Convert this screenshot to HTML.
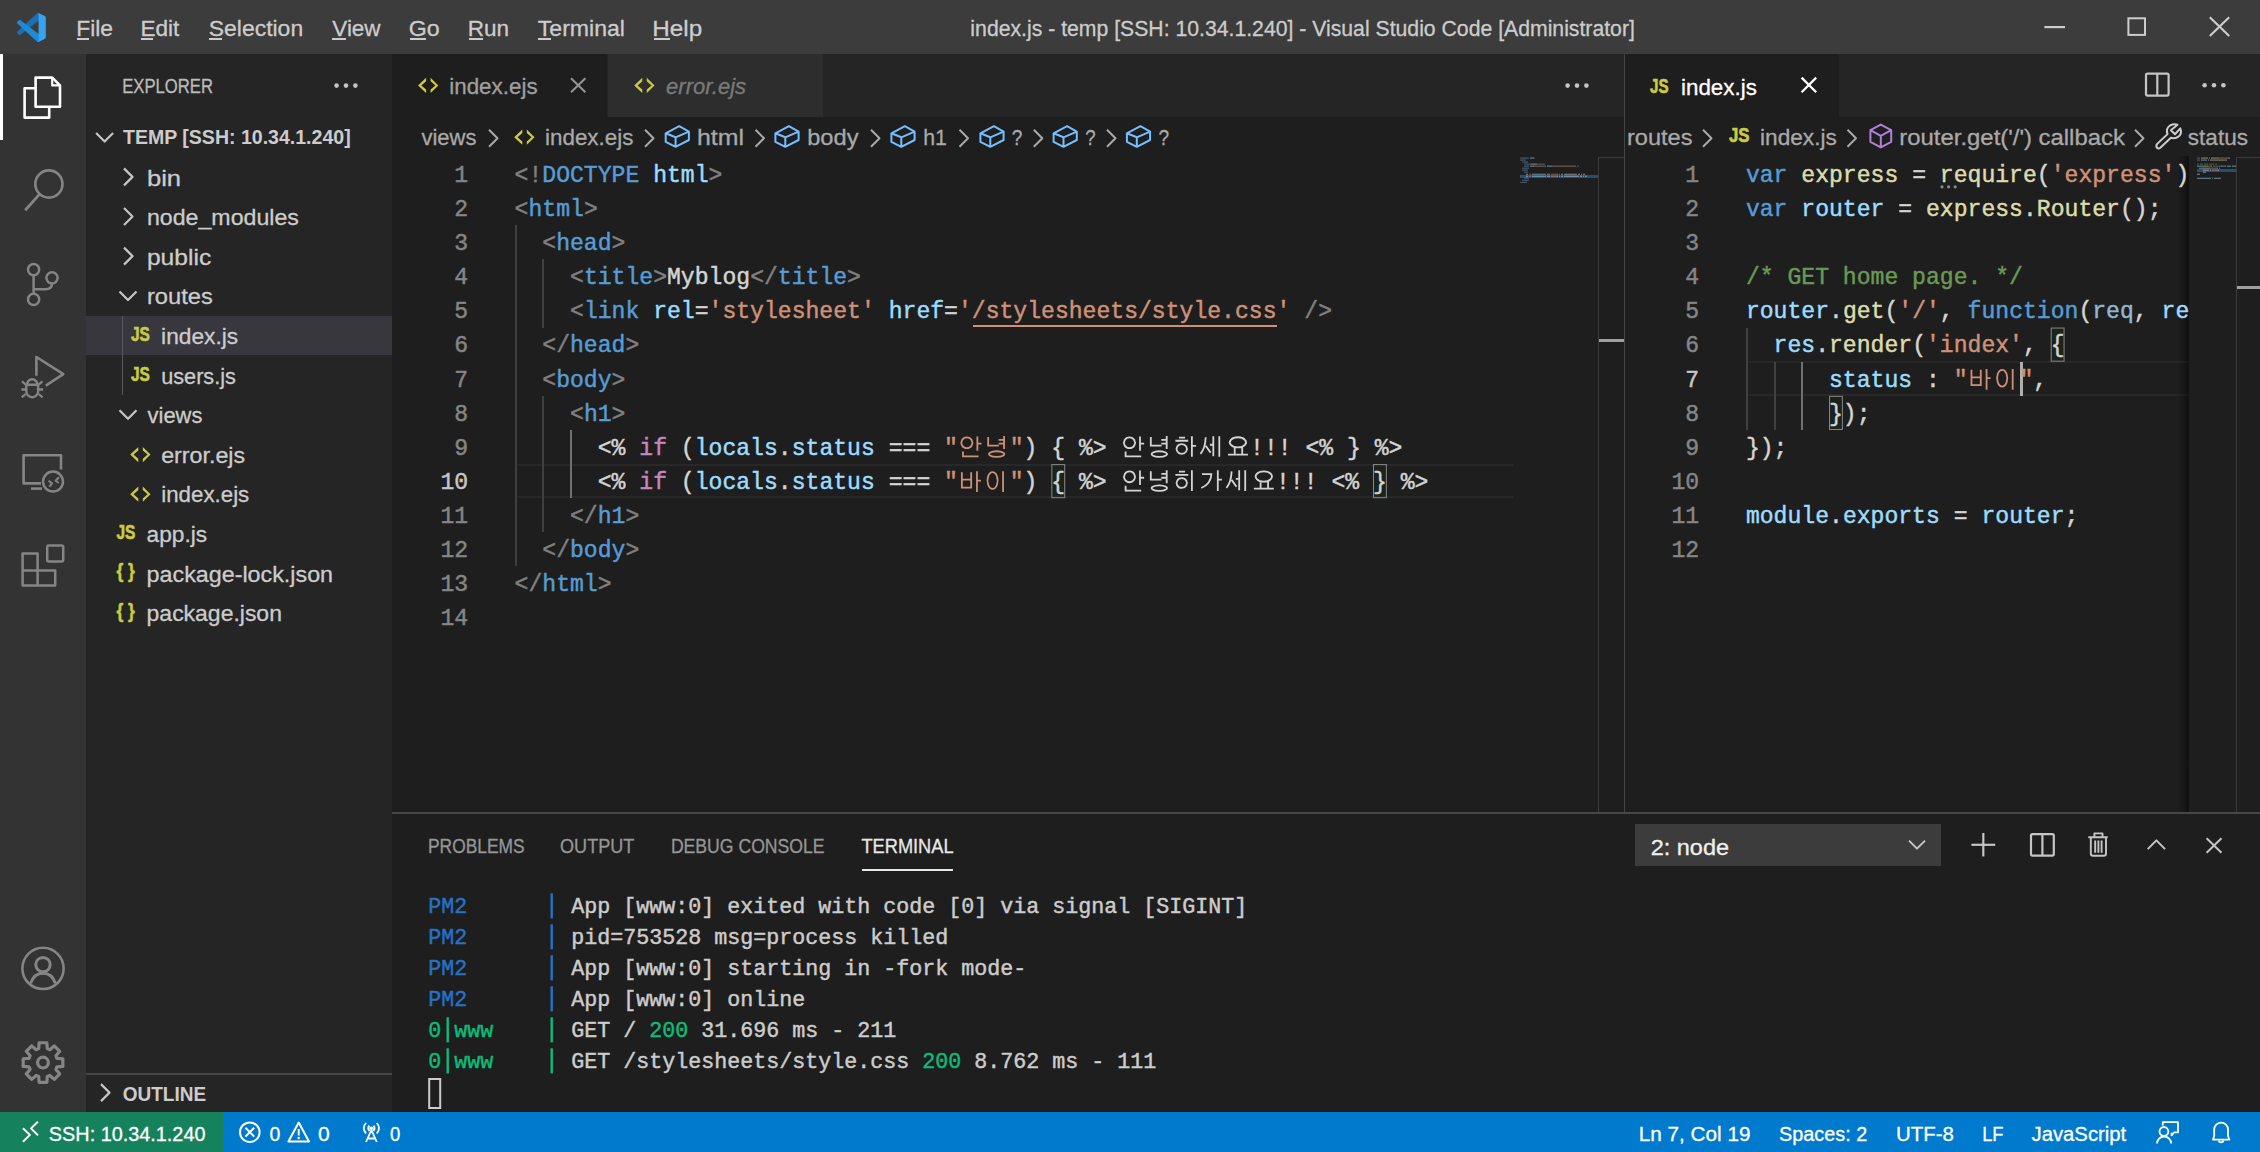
<!DOCTYPE html><html><head><meta charset="utf-8"><title>index.js - temp [SSH: 10.34.1.240] - Visual Studio Code</title><style>
html,body{margin:0;padding:0;width:2260px;height:1152px;overflow:hidden;background:#1e1e1e;}
#root{position:relative;width:2260px;height:1152px;overflow:hidden;font-family:"Liberation Sans",sans-serif;}
#root>div{position:absolute;}
svg.ov{position:absolute;left:0;top:0;}
text{white-space:pre;}
</style></head><body><div id="root">
<div style="left:0.00px;top:0.00px;width:2260.00px;height:54.00px;background:#3c3c3c;"></div>
<div style="left:0.00px;top:54.00px;width:86.00px;height:1058.00px;background:#333333;"></div>
<div style="left:86.00px;top:54.00px;width:306.00px;height:1058.00px;background:#252526;"></div>
<div style="left:392.00px;top:54.00px;width:1868.00px;height:1058.00px;background:#1e1e1e;"></div>
<div style="left:392.00px;top:54.00px;width:1232.00px;height:63.00px;background:#252526;"></div>
<div style="left:392.00px;top:54.00px;width:215.00px;height:63.00px;background:#1e1e1e;"></div>
<div style="left:608.00px;top:54.00px;width:215.00px;height:63.00px;background:#2d2d2d;"></div>
<div style="left:1625.00px;top:54.00px;width:635.00px;height:63.00px;background:#252526;"></div>
<div style="left:1625.00px;top:54.00px;width:214.00px;height:63.00px;background:#1e1e1e;"></div>
<div style="left:1624.00px;top:54.00px;width:1.00px;height:759.00px;background:#444444;"></div>
<div style="left:0.00px;top:1112.00px;width:2260.00px;height:40.00px;background:#007acc;"></div>
<div style="left:0.00px;top:1112.00px;width:223.00px;height:40.00px;background:#16825d;"></div>
<div style="left:0.00px;top:54.00px;width:3.00px;height:86.00px;background:#ffffff;"></div>
<div style="left:77.00px;top:38.40px;width:12.00px;height:1.80px;background:#cccccc;"></div>
<div style="left:141.00px;top:38.40px;width:12.00px;height:1.80px;background:#cccccc;"></div>
<div style="left:209.00px;top:38.40px;width:13.00px;height:1.80px;background:#cccccc;"></div>
<div style="left:332.00px;top:38.40px;width:14.00px;height:1.80px;background:#cccccc;"></div>
<div style="left:410.00px;top:38.40px;width:16.00px;height:1.80px;background:#cccccc;"></div>
<div style="left:469.00px;top:38.40px;width:14.00px;height:1.80px;background:#cccccc;"></div>
<div style="left:538.00px;top:38.40px;width:13.00px;height:1.80px;background:#cccccc;"></div>
<div style="left:654.00px;top:38.40px;width:16.00px;height:1.80px;background:#cccccc;"></div>
<div style="left:86.00px;top:315.50px;width:306.00px;height:39.60px;background:#37373d;"></div>
<div style="left:121.60px;top:315.50px;width:1.20px;height:79.20px;background:#585858;"></div>
<div style="left:86.00px;top:1073.00px;width:306.00px;height:2.00px;background:#464646;"></div>
<div style="left:515.00px;top:463.57px;width:998.00px;height:2.30px;background:#282828;"></div>
<div style="left:515.00px;top:495.90px;width:998.00px;height:2.30px;background:#282828;"></div>
<div style="left:515.00px;top:225.16px;width:2.00px;height:341.30px;background:#404040;"></div>
<div style="left:542.00px;top:259.29px;width:2.00px;height:68.26px;background:#404040;"></div>
<div style="left:542.00px;top:395.81px;width:2.00px;height:136.52px;background:#404040;"></div>
<div style="left:570.00px;top:429.94px;width:2.00px;height:68.26px;background:#707070;"></div>
<div style="left:972.82px;top:325.02px;width:303.81px;height:2.00px;background:#ce9178;"></div>
<div style="left:1746.00px;top:361.18px;width:443.00px;height:2.30px;background:#282828;"></div>
<div style="left:1746.00px;top:393.51px;width:443.00px;height:2.30px;background:#282828;"></div>
<div style="left:1746.00px;top:327.55px;width:2.00px;height:102.39px;background:#404040;"></div>
<div style="left:1774.00px;top:361.68px;width:2.00px;height:68.26px;background:#404040;"></div>
<div style="left:1801.00px;top:361.68px;width:2.00px;height:68.26px;background:#707070;"></div>
<div style="left:2019.90px;top:361.98px;width:2.80px;height:34.33px;background:#aeafad;"></div>
<div style="left:2177px;top:156px;width:12px;height:657px;background:linear-gradient(to right, rgba(0,0,0,0), rgba(0,0,0,0.45));"></div>
<div style="left:1598.00px;top:156.50px;width:1.20px;height:656.50px;background:#3a3a3a;"></div>
<div style="left:1598.00px;top:156.50px;width:26.00px;height:1.20px;background:#3a3a3a;"></div>
<div style="left:1599.00px;top:339.00px;width:25.00px;height:3.00px;background:#a0a0a0;"></div>
<div style="left:2236.00px;top:156.50px;width:1.20px;height:656.50px;background:#3a3a3a;"></div>
<div style="left:2236.00px;top:156.50px;width:24.00px;height:1.20px;background:#3a3a3a;"></div>
<div style="left:2237.00px;top:285.50px;width:23.00px;height:3.00px;background:#a0a0a0;"></div>
<div style="left:1520.00px;top:175.27px;width:78.00px;height:2.43px;background:#264f78;"></div>
<div style="left:2197.00px;top:169.18px;width:39.00px;height:2.43px;background:#264f78;"></div>
<div style="left:392.00px;top:812.00px;width:1868.00px;height:2.00px;background:#474747;"></div>
<div style="left:861.50px;top:869.00px;width:91.50px;height:2.00px;background:#e7e7e7;"></div>
<div style="left:1634.80px;top:824.20px;width:305.80px;height:41.60px;background:#3c3c3c;"></div>
<svg class="ov" width="2260" height="1152" viewBox="0 0 2260 1152">
<g transform="translate(17,12.9) scale(0.288,0.291)"><path fill="#1b6fb3" d="M96.46 10.8L75.86.88C73.47-.27 70.62.21 68.75 2.08L1.3 63.58c-1.81 1.65-1.81 4.51 0 6.16l5.51 5.01c1.49 1.35 3.72 1.45 5.32.24L93.36 13.37C96.09 11.3 100 13.25 100 16.67v-.24c0-2.4-1.38-4.59-3.54-5.63z"/><path fill="#1d8ad9" d="M96.46 89.2L75.86 99.12c-2.39 1.15-5.24.67-7.11-1.2L1.3 36.42c-1.81-1.65-1.81-4.51 0-6.16l5.51-5.01c1.49-1.35 3.72-1.45 5.32-.24L93.36 86.63c2.73 2.07 6.64.12 6.64-3.3v.24c0 2.4-1.38 4.59-3.54 5.63z"/><path fill="#35a3ef" d="M75.86 99.13c-2.39 1.15-5.24.66-7.11-1.21 2.31 2.31 6.25.67 6.25-2.59V4.67c0-3.26-3.94-4.9-6.25-2.59 1.87-1.87 4.72-2.36 7.11-1.21l20.6 9.91A6.25 6.25 0 0 1 100 16.41v67.18a6.25 6.25 0 0 1-3.54 5.63z"/></g>
<text transform="translate(76.20,36.10) scale(1.0000,1)" font-size="22.80" fill="#cccccc" stroke="#cccccc" stroke-width="0.3" font-family="Liberation Sans" >File</text>
<text transform="translate(140.42,36.10) scale(0.9895,1)" font-size="22.80" fill="#cccccc" stroke="#cccccc" stroke-width="0.3" font-family="Liberation Sans" >Edit</text>
<text transform="translate(208.69,36.10) scale(1.0076,1)" font-size="22.80" fill="#cccccc" stroke="#cccccc" stroke-width="0.3" font-family="Liberation Sans" >Selection</text>
<text transform="translate(332.30,36.10) scale(0.9857,1)" font-size="22.80" fill="#cccccc" stroke="#cccccc" stroke-width="0.3" font-family="Liberation Sans" >View</text>
<text transform="translate(408.78,36.10) scale(1.0172,1)" font-size="22.80" fill="#cccccc" stroke="#cccccc" stroke-width="0.3" font-family="Liberation Sans" >Go</text>
<text transform="translate(467.72,36.10) scale(0.9897,1)" font-size="22.80" fill="#cccccc" stroke="#cccccc" stroke-width="0.3" font-family="Liberation Sans" >Run</text>
<text transform="translate(537.80,36.10) scale(1.0118,1)" font-size="22.80" fill="#cccccc" stroke="#cccccc" stroke-width="0.3" font-family="Liberation Sans" >Terminal</text>
<text transform="translate(652.27,36.10) scale(1.0636,1)" font-size="22.80" fill="#cccccc" stroke="#cccccc" stroke-width="0.3" font-family="Liberation Sans" >Help</text>
<text transform="translate(970.37,35.90) scale(0.9305,1)" font-size="22.80" fill="#cccccc" stroke="#cccccc" stroke-width="0.3" font-family="Liberation Sans" >index.js - temp [SSH: 10.34.1.240] - Visual Studio Code [Administrator]</text>
<line x1="2044.40" y1="27.10" x2="2065.00" y2="27.10" stroke="#cccccc" stroke-width="2.2" stroke-linecap="butt" />
<rect x="2128.4" y="18.3" width="16.6" height="16.6" fill="none" stroke="#cccccc" stroke-width="2"/>
<line x1="2209.80" y1="17.30" x2="2229.20" y2="36.00" stroke="#cccccc" stroke-width="2.2" stroke-linecap="butt" />
<line x1="2229.20" y1="17.30" x2="2209.80" y2="36.00" stroke="#cccccc" stroke-width="2.2" stroke-linecap="butt" />
<path d="M35.6 77.6 H52.2 L60 85.4 V106.8 H35.6 Z" stroke="#ffffff" stroke-width="2.6" fill="none" stroke-linejoin="round" />
<path d="M52.2 77.6 V85.4 H60" stroke="#ffffff" stroke-width="2.2" fill="none" stroke-linejoin="round" />
<path d="M35.6 88.2 H24.6 V117.6 H49.2 V106.8" stroke="#ffffff" stroke-width="2.6" fill="none" stroke-linejoin="round" />
<circle cx="48.9" cy="184" r="13.6" fill="none" stroke="#858585" stroke-width="2.6"/>
<line x1="39.40" y1="194.40" x2="25.20" y2="210.20" stroke="#858585" stroke-width="2.8" stroke-linecap="butt" />
<circle cx="33.6" cy="269.6" r="5.6" fill="none" stroke="#858585" stroke-width="2.5"/>
<circle cx="52" cy="277.8" r="5.6" fill="none" stroke="#858585" stroke-width="2.5"/>
<circle cx="33.6" cy="299.4" r="5.6" fill="none" stroke="#858585" stroke-width="2.5"/>
<line x1="33.60" y1="275.20" x2="33.60" y2="293.80" stroke="#858585" stroke-width="2.5" stroke-linecap="butt" />
<path d="M52 283.4 Q52 289.2 45 289.2 H33.6" stroke="#858585" stroke-width="2.5" fill="none" stroke-linejoin="round" />
<path d="M36.4 375.7 V357 L63.3 374.1 L45.8 385.6" stroke="#858585" stroke-width="2.6" fill="none" stroke-linejoin="round" />
<path d="M27 384.8 A5.2 5.6 0 0 1 37.4 384.8 Z" stroke="#858585" stroke-width="2.4" fill="none" stroke-linejoin="round" />
<path d="M26.3 384.8 V391.2 A5.9 6.1 0 0 0 38.1 391.2 V384.8" stroke="#858585" stroke-width="2.4" fill="none" stroke-linejoin="round" />
<path d="M22 381.4 L25.8 384.6 M42.4 381.4 L38.6 384.6 M21.4 389.5 H26.2 M38.3 389.5 H43.2 M21.8 397.3 L25.6 394 M42.6 397.3 L38.8 394" stroke="#858585" stroke-width="2.3" fill="none" stroke-linejoin="round" />
<path d="M61 469.5 V455.2 H23.6 V483.4 H41" stroke="#858585" stroke-width="2.6" fill="none" stroke-linejoin="round" />
<line x1="31.00" y1="488.60" x2="42.00" y2="488.60" stroke="#858585" stroke-width="2.6" stroke-linecap="butt" />
<circle cx="53" cy="481.6" r="10" fill="none" stroke="#858585" stroke-width="2.5"/>
<path d="M48.6 480.8 L52.1 483.4 L49.3 486.6 M59 477.3 L55.6 480.8 L58.8 483" stroke="#858585" stroke-width="2.0" fill="none" stroke-linejoin="round" />
<rect x="47.2" y="545.4" width="16" height="16" rx="1.5" fill="none" stroke="#858585" stroke-width="2.5"/>
<path d="M22.6 553.6 H37.6 V570.6 H55.2 V585.6 H22.6 Z M22.6 570.6 H37.6 V585.6" stroke="#858585" stroke-width="2.5" fill="none" stroke-linejoin="round" />
<circle cx="43" cy="968.4" r="20.6" fill="none" stroke="#858585" stroke-width="2.6"/>
<circle cx="43" cy="964.6" r="7.2" fill="none" stroke="#858585" stroke-width="3.0"/>
<path d="M30.6 983.4 Q34 973.2 43 973.2 Q52 973.2 55.4 983.4" stroke="#858585" stroke-width="3.0" fill="none" stroke-linejoin="round" />
<path d="M39.15 1042.77 L46.85 1042.77 L47.27 1048.64 L49.85 1049.71 L54.30 1045.85 L59.75 1051.30 L55.89 1055.75 L56.96 1058.33 L62.83 1058.75 L62.83 1066.45 L56.96 1066.87 L55.89 1069.45 L59.75 1073.90 L54.30 1079.35 L49.85 1075.49 L47.27 1076.56 L46.85 1082.43 L39.15 1082.43 L38.73 1076.56 L36.15 1075.49 L31.70 1079.35 L26.25 1073.90 L30.11 1069.45 L29.04 1066.87 L23.17 1066.45 L23.17 1058.75 L29.04 1058.33 L30.11 1055.75 L26.25 1051.30 L31.70 1045.85 L36.15 1049.71 L38.73 1048.64 Z" stroke="#858585" stroke-width="3.2" fill="none" stroke-linejoin="round" />
<circle cx="43" cy="1062.6" r="5.4" fill="none" stroke="#858585" stroke-width="3.2"/>
<text transform="translate(122.24,92.80) scale(0.8631,1)" font-size="19.30" fill="#bbbbbb" stroke="#bbbbbb" stroke-width="0.3" font-family="Liberation Sans" >EXPLORER</text>
<circle cx="336.6" cy="85.6" r="2.3" fill="#c5c5c5"/>
<circle cx="346" cy="85.6" r="2.3" fill="#c5c5c5"/>
<circle cx="355.4" cy="85.6" r="2.3" fill="#c5c5c5"/>
<path d="M96.10 133.00 L104.60 141.60 L113.10 133.00" stroke="#c5c5c5" stroke-width="2.2" fill="none" stroke-linejoin="round" stroke-linejoin="miter"/>
<text transform="translate(123.00,143.60) scale(1.0134,1)" font-size="19.30" fill="#cccccc" stroke="#cccccc" stroke-width="0" font-family="Liberation Sans" font-weight="bold" >TEMP [SSH: 10.34.1.240]</text>
<path d="M124.00 168.40 L132.50 176.90 L124.00 185.40" stroke="#c5c5c5" stroke-width="2.2" fill="none" stroke-linejoin="round" stroke-linejoin="miter"/>
<text transform="translate(146.88,185.60) scale(1.1250,1)" font-size="22.80" fill="#cccccc" stroke="#cccccc" stroke-width="0.3" font-family="Liberation Sans" >bin</text>
<path d="M124.00 208.00 L132.50 216.50 L124.00 225.00" stroke="#c5c5c5" stroke-width="2.2" fill="none" stroke-linejoin="round" stroke-linejoin="miter"/>
<text transform="translate(146.98,225.20) scale(1.0162,1)" font-size="22.80" fill="#cccccc" stroke="#cccccc" stroke-width="0.3" font-family="Liberation Sans" >node_modules</text>
<path d="M124.00 247.60 L132.50 256.10 L124.00 264.60" stroke="#c5c5c5" stroke-width="2.2" fill="none" stroke-linejoin="round" stroke-linejoin="miter"/>
<text transform="translate(146.92,264.80) scale(1.0793,1)" font-size="22.80" fill="#cccccc" stroke="#cccccc" stroke-width="0.3" font-family="Liberation Sans" >public</text>
<path d="M119.50 291.40 L128.00 300.00 L136.50 291.40" stroke="#c5c5c5" stroke-width="2.2" fill="none" stroke-linejoin="round" stroke-linejoin="miter"/>
<text transform="translate(146.96,304.40) scale(1.0387,1)" font-size="22.80" fill="#cccccc" stroke="#cccccc" stroke-width="0.3" font-family="Liberation Sans" >routes</text>
<text transform="translate(131.00,341.10) scale(0.8000,1)" font-size="19.30" fill="#cbcb41" stroke="#cbcb41" stroke-width="0.6" font-family="Liberation Sans" font-weight="bold" >JS</text>
<text transform="translate(161.10,344.00) scale(0.9974,1)" font-size="22.80" fill="#cccccc" stroke="#cccccc" stroke-width="0.3" font-family="Liberation Sans" >index.js</text>
<text transform="translate(131.00,380.70) scale(0.8000,1)" font-size="19.30" fill="#cbcb41" stroke="#cbcb41" stroke-width="0.6" font-family="Liberation Sans" font-weight="bold" >JS</text>
<text transform="translate(161.15,383.60) scale(0.9519,1)" font-size="22.80" fill="#cccccc" stroke="#cccccc" stroke-width="0.3" font-family="Liberation Sans" >users.js</text>
<path d="M119.50 410.20 L128.00 418.80 L136.50 410.20" stroke="#c5c5c5" stroke-width="2.2" fill="none" stroke-linejoin="round" stroke-linejoin="miter"/>
<text transform="translate(147.60,423.20) scale(0.9614,1)" font-size="22.80" fill="#cccccc" stroke="#cccccc" stroke-width="0.3" font-family="Liberation Sans" >views</text>
<path d="M138.30 447.00 L130.20 454.60 L138.30 462.20 L138.30 458.80 L133.50 454.60 L138.30 450.40 Z M142.80 447.00 L150.50 454.60 L142.80 462.20 L142.80 458.80 L147.60 454.60 L142.80 450.40 Z" fill="#cbcb41"/>
<text transform="translate(161.18,462.80) scale(1.0198,1)" font-size="22.80" fill="#cccccc" stroke="#cccccc" stroke-width="0.3" font-family="Liberation Sans" >error.ejs</text>
<path d="M138.30 486.60 L130.20 494.20 L138.30 501.80 L138.30 498.40 L133.50 494.20 L138.30 490.00 Z M142.80 486.60 L150.50 494.20 L142.80 501.80 L142.80 498.40 L147.60 494.20 L142.80 490.00 Z" fill="#cbcb41"/>
<text transform="translate(161.22,502.40) scale(0.9787,1)" font-size="22.80" fill="#cccccc" stroke="#cccccc" stroke-width="0.3" font-family="Liberation Sans" >index.ejs</text>
<text transform="translate(116.40,539.10) scale(0.8000,1)" font-size="19.30" fill="#cbcb41" stroke="#cbcb41" stroke-width="0.6" font-family="Liberation Sans" font-weight="bold" >JS</text>
<text transform="translate(146.60,542.00) scale(0.9950,1)" font-size="22.80" fill="#cccccc" stroke="#cccccc" stroke-width="0.3" font-family="Liberation Sans" >app.js</text>
<text transform="translate(116.40,577.90) scale(0.8364,1)" font-size="21.00" fill="#cbcb41" stroke="#cbcb41" stroke-width="0.5" font-family="Liberation Sans" font-weight="bold" >{ }</text>
<text transform="translate(146.58,581.60) scale(1.0222,1)" font-size="22.80" fill="#cccccc" stroke="#cccccc" stroke-width="0.3" font-family="Liberation Sans" >package-lock.json</text>
<text transform="translate(116.40,617.50) scale(0.8364,1)" font-size="21.00" fill="#cbcb41" stroke="#cbcb41" stroke-width="0.5" font-family="Liberation Sans" font-weight="bold" >{ }</text>
<text transform="translate(146.59,621.20) scale(1.0076,1)" font-size="22.80" fill="#cccccc" stroke="#cccccc" stroke-width="0.3" font-family="Liberation Sans" >package.json</text>
<path d="M101.00 1084.10 L109.50 1092.60 L101.00 1101.10" stroke="#c5c5c5" stroke-width="2.2" fill="none" stroke-linejoin="round" stroke-linejoin="miter"/>
<text transform="translate(122.70,1100.50) scale(0.9845,1)" font-size="19.30" fill="#cccccc" stroke="#cccccc" stroke-width="0" font-family="Liberation Sans" font-weight="bold" >OUTLINE</text>
<path d="M426.10 77.80 L418.00 85.40 L426.10 93.00 L426.10 89.60 L421.30 85.40 L426.10 81.20 Z M430.60 77.80 L438.30 85.40 L430.60 93.00 L430.60 89.60 L435.40 85.40 L430.60 81.20 Z" fill="#cbcb41"/>
<text transform="translate(449.22,93.80) scale(0.9831,1)" font-size="22.80" fill="#a0a0a0" stroke="#a0a0a0" stroke-width="0.3" font-family="Liberation Sans" >index.ejs</text>
<line x1="571.00" y1="78.20" x2="585.40" y2="92.20" stroke="#969696" stroke-width="2.0" stroke-linecap="butt" />
<line x1="585.40" y1="78.20" x2="571.00" y2="92.20" stroke="#969696" stroke-width="2.0" stroke-linecap="butt" />
<path d="M642.30 77.80 L634.20 85.40 L642.30 93.00 L642.30 89.60 L637.50 85.40 L642.30 81.20 Z M646.80 77.80 L654.50 85.40 L646.80 93.00 L646.80 89.60 L651.60 85.40 L646.80 81.20 Z" fill="#cbcb41"/>
<text transform="translate(666.00,93.80) scale(0.9683,1)" font-size="22.80" fill="#7a7a7a" stroke="#7a7a7a" stroke-width="0.3" font-family="Liberation Sans" font-style="italic" >error.ejs</text>
<circle cx="1567.6" cy="85.6" r="2.3" fill="#c5c5c5"/>
<circle cx="1577" cy="85.6" r="2.3" fill="#c5c5c5"/>
<circle cx="1586.4" cy="85.6" r="2.3" fill="#c5c5c5"/>
<text transform="translate(1650.00,92.90) scale(0.7826,1)" font-size="19.30" fill="#cbcb41" stroke="#cbcb41" stroke-width="0.6" font-family="Liberation Sans" font-weight="bold" >JS</text>
<text transform="translate(1681.02,94.70) scale(0.9816,1)" font-size="22.80" fill="#ffffff" stroke="#ffffff" stroke-width="0.3" font-family="Liberation Sans" >index.js</text>
<line x1="1801.60" y1="77.60" x2="1816.20" y2="92.20" stroke="#ffffff" stroke-width="2.2" stroke-linecap="butt" />
<line x1="1816.20" y1="77.60" x2="1801.60" y2="92.20" stroke="#ffffff" stroke-width="2.2" stroke-linecap="butt" />
<rect x="2146" y="73.6" width="22.6" height="22" rx="1.5" fill="none" stroke="#c5c5c5" stroke-width="2.2"/>
<line x1="2157.30" y1="73.60" x2="2157.30" y2="95.60" stroke="#c5c5c5" stroke-width="2.2" stroke-linecap="butt" />
<circle cx="2204.6" cy="85.2" r="2.3" fill="#c5c5c5"/>
<circle cx="2214" cy="85.2" r="2.3" fill="#c5c5c5"/>
<circle cx="2223.4" cy="85.2" r="2.3" fill="#c5c5c5"/>
<text transform="translate(421.40,145.30) scale(0.9649,1)" font-size="22.80" fill="#a9a9a9" stroke="#a9a9a9" stroke-width="0.3" font-family="Liberation Sans" >views</text>
<path d="M489.00 129.80 L497.50 138.30 L489.00 146.80" stroke="#a9a9a9" stroke-width="2.0" fill="none" stroke-linejoin="round" stroke-linejoin="miter"/>
<path d="M522.30 129.60 L514.20 137.20 L522.30 144.80 L522.30 141.40 L517.50 137.20 L522.30 133.00 Z M526.80 129.60 L534.50 137.20 L526.80 144.80 L526.80 141.40 L531.60 137.20 L526.80 133.00 Z" fill="#cbcb41"/>
<text transform="translate(545.02,145.30) scale(0.9820,1)" font-size="22.80" fill="#a9a9a9" stroke="#a9a9a9" stroke-width="0.3" font-family="Liberation Sans" >index.ejs</text>
<path d="M645.00 129.80 L653.50 138.30 L645.00 146.80" stroke="#a9a9a9" stroke-width="2.0" fill="none" stroke-linejoin="round" stroke-linejoin="miter"/>
<path d="M665.70 133.30 L679.20 126.20 L688.90 131.70 L688.90 140.00 L675.60 146.80 L665.70 141.90 Z M665.70 133.30 L675.60 137.30 L688.90 131.70 M675.60 137.30 L675.60 146.80" stroke="#75beff" stroke-width="2.0" fill="none" stroke-linejoin="round" />
<text transform="translate(696.91,145.30) scale(1.0927,1)" font-size="22.80" fill="#a9a9a9" stroke="#a9a9a9" stroke-width="0.3" font-family="Liberation Sans" >html</text>
<path d="M755.50 129.80 L764.00 138.30 L755.50 146.80" stroke="#a9a9a9" stroke-width="2.0" fill="none" stroke-linejoin="round" stroke-linejoin="miter"/>
<path d="M775.40 133.30 L788.90 126.20 L798.60 131.70 L798.60 140.00 L785.30 146.80 L775.40 141.90 Z M775.40 133.30 L785.30 137.30 L798.60 131.70 M785.30 137.30 L785.30 146.80" stroke="#75beff" stroke-width="2.0" fill="none" stroke-linejoin="round" />
<text transform="translate(807.16,145.30) scale(1.0388,1)" font-size="22.80" fill="#a9a9a9" stroke="#a9a9a9" stroke-width="0.3" font-family="Liberation Sans" >body</text>
<path d="M871.00 129.80 L879.50 138.30 L871.00 146.80" stroke="#a9a9a9" stroke-width="2.0" fill="none" stroke-linejoin="round" stroke-linejoin="miter"/>
<path d="M891.40 133.30 L904.90 126.20 L914.60 131.70 L914.60 140.00 L901.30 146.80 L891.40 141.90 Z M891.40 133.30 L901.30 137.30 L914.60 131.70 M901.30 137.30 L901.30 146.80" stroke="#75beff" stroke-width="2.0" fill="none" stroke-linejoin="round" />
<text transform="translate(923.27,145.30) scale(0.9333,1)" font-size="22.80" fill="#a9a9a9" stroke="#a9a9a9" stroke-width="0.3" font-family="Liberation Sans" >h1</text>
<path d="M959.50 129.80 L968.00 138.30 L959.50 146.80" stroke="#a9a9a9" stroke-width="2.0" fill="none" stroke-linejoin="round" stroke-linejoin="miter"/>
<path d="M980.40 133.30 L993.90 126.20 L1003.60 131.70 L1003.60 140.00 L990.30 146.80 L980.40 141.90 Z M980.40 133.30 L990.30 137.30 L1003.60 131.70 M990.30 137.30 L990.30 146.80" stroke="#75beff" stroke-width="2.0" fill="none" stroke-linejoin="round" />
<text transform="translate(1011.86,145.30) scale(0.8364,1)" font-size="22.80" fill="#a9a9a9" stroke="#a9a9a9" stroke-width="0.3" font-family="Liberation Sans" >?</text>
<path d="M1033.80 129.80 L1042.30 138.30 L1033.80 146.80" stroke="#a9a9a9" stroke-width="2.0" fill="none" stroke-linejoin="round" stroke-linejoin="miter"/>
<path d="M1053.60 133.30 L1067.10 126.20 L1076.80 131.70 L1076.80 140.00 L1063.50 146.80 L1053.60 141.90 Z M1053.60 133.30 L1063.50 137.30 L1076.80 131.70 M1063.50 137.30 L1063.50 146.80" stroke="#75beff" stroke-width="2.0" fill="none" stroke-linejoin="round" />
<text transform="translate(1085.18,145.30) scale(0.8182,1)" font-size="22.80" fill="#a9a9a9" stroke="#a9a9a9" stroke-width="0.3" font-family="Liberation Sans" >?</text>
<path d="M1107.00 129.80 L1115.50 138.30 L1107.00 146.80" stroke="#a9a9a9" stroke-width="2.0" fill="none" stroke-linejoin="round" stroke-linejoin="miter"/>
<path d="M1126.90 133.30 L1140.40 126.20 L1150.10 131.70 L1150.10 140.00 L1136.80 146.80 L1126.90 141.90 Z M1126.90 133.30 L1136.80 137.30 L1150.10 131.70 M1136.80 137.30 L1136.80 146.80" stroke="#75beff" stroke-width="2.0" fill="none" stroke-linejoin="round" />
<text transform="translate(1158.46,145.30) scale(0.8364,1)" font-size="22.80" fill="#a9a9a9" stroke="#a9a9a9" stroke-width="0.3" font-family="Liberation Sans" >?</text>
<text transform="translate(1626.96,145.30) scale(1.0355,1)" font-size="22.80" fill="#a9a9a9" stroke="#a9a9a9" stroke-width="0.3" font-family="Liberation Sans" >routes</text>
<path d="M1703.00 129.80 L1711.50 138.30 L1703.00 146.80" stroke="#a9a9a9" stroke-width="2.0" fill="none" stroke-linejoin="round" stroke-linejoin="miter"/>
<text transform="translate(1729.00,141.90) scale(0.8696,1)" font-size="19.30" fill="#cbcb41" stroke="#cbcb41" stroke-width="0.6" font-family="Liberation Sans" font-weight="bold" >JS</text>
<text transform="translate(1760.01,145.30) scale(0.9947,1)" font-size="22.80" fill="#a9a9a9" stroke="#a9a9a9" stroke-width="0.3" font-family="Liberation Sans" >index.js</text>
<path d="M1847.50 129.80 L1856.00 138.30 L1847.50 146.80" stroke="#a9a9a9" stroke-width="2.0" fill="none" stroke-linejoin="round" stroke-linejoin="miter"/>
<path d="M1880.80 124.60 L1891.20 130.20 L1891.20 141.80 L1880.80 147.40 L1870.40 141.80 L1870.40 130.20 Z M1870.40 130.20 L1880.80 135.80 L1891.20 130.20 M1880.80 135.80 L1880.80 147.40" stroke="#b180d7" stroke-width="2.0" fill="none" stroke-linejoin="round" />
<text transform="translate(1899.35,145.30) scale(1.0481,1)" font-size="22.80" fill="#a9a9a9" stroke="#a9a9a9" stroke-width="0.3" font-family="Liberation Sans" >router.get(&#x27;/&#x27;) callback</text>
<path d="M2135.00 129.80 L2143.50 138.30 L2135.00 146.80" stroke="#a9a9a9" stroke-width="2.0" fill="none" stroke-linejoin="round" stroke-linejoin="miter"/>
<path d="M2157.20 143.90 L2167.50 134.10 Q2165.50 128.50 2170.00 125.50 Q2174.00 123.30 2177.50 124.70 L2170.90 130.20 L2175.00 134.25 L2180.30 128.30 Q2182.50 134.00 2178.00 136.80 Q2174.50 139.00 2170.90 137.80 L2160.30 147.70 Q2158.50 149.30 2157.00 147.80 Q2155.60 146.00 2157.20 143.90 Z" stroke="#cccccc" stroke-width="2.0" fill="none" stroke-linejoin="round" />
<text transform="translate(2187.80,145.30) scale(0.9902,1)" font-size="22.80" fill="#a9a9a9" stroke="#a9a9a9" stroke-width="0.3" font-family="Liberation Sans" >status</text>
<rect x="1051.83" y="464.57" width="12.86" height="33.13" fill="#0064001a" stroke="#888888" stroke-width="1"/>
<rect x="1373.49" y="464.57" width="12.86" height="33.13" fill="#0064001a" stroke="#888888" stroke-width="1"/>
<text x="514.60" y="181.80" font-size="23.09" fill="#808080" stroke="#808080" stroke-width="0.45" font-family="Liberation Mono" xml:space="preserve">&lt;!</text>
<text x="542.31" y="181.80" font-size="23.09" fill="#569cd6" stroke="#569cd6" stroke-width="0.45" font-family="Liberation Mono" xml:space="preserve">DOCTYPE</text>
<text x="653.15" y="181.80" font-size="23.09" fill="#9cdcfe" stroke="#9cdcfe" stroke-width="0.45" font-family="Liberation Mono" xml:space="preserve">html</text>
<text x="708.57" y="181.80" font-size="23.09" fill="#808080" stroke="#808080" stroke-width="0.45" font-family="Liberation Mono" xml:space="preserve">&gt;</text>
<text x="514.60" y="215.93" font-size="23.09" fill="#808080" stroke="#808080" stroke-width="0.45" font-family="Liberation Mono" xml:space="preserve">&lt;</text>
<text x="528.46" y="215.93" font-size="23.09" fill="#569cd6" stroke="#569cd6" stroke-width="0.45" font-family="Liberation Mono" xml:space="preserve">html</text>
<text x="583.88" y="215.93" font-size="23.09" fill="#808080" stroke="#808080" stroke-width="0.45" font-family="Liberation Mono" xml:space="preserve">&gt;</text>
<text x="542.31" y="250.06" font-size="23.09" fill="#808080" stroke="#808080" stroke-width="0.45" font-family="Liberation Mono" xml:space="preserve">&lt;</text>
<text x="556.17" y="250.06" font-size="23.09" fill="#569cd6" stroke="#569cd6" stroke-width="0.45" font-family="Liberation Mono" xml:space="preserve">head</text>
<text x="611.59" y="250.06" font-size="23.09" fill="#808080" stroke="#808080" stroke-width="0.45" font-family="Liberation Mono" xml:space="preserve">&gt;</text>
<text x="570.02" y="284.19" font-size="23.09" fill="#808080" stroke="#808080" stroke-width="0.45" font-family="Liberation Mono" xml:space="preserve">&lt;</text>
<text x="583.88" y="284.19" font-size="23.09" fill="#569cd6" stroke="#569cd6" stroke-width="0.45" font-family="Liberation Mono" xml:space="preserve">title</text>
<text x="653.15" y="284.19" font-size="23.09" fill="#808080" stroke="#808080" stroke-width="0.45" font-family="Liberation Mono" xml:space="preserve">&gt;</text>
<text x="667.01" y="284.19" font-size="23.09" fill="#d4d4d4" stroke="#d4d4d4" stroke-width="0.45" font-family="Liberation Mono" xml:space="preserve">Myblog</text>
<text x="750.14" y="284.19" font-size="23.09" fill="#808080" stroke="#808080" stroke-width="0.45" font-family="Liberation Mono" xml:space="preserve">&lt;/</text>
<text x="777.85" y="284.19" font-size="23.09" fill="#569cd6" stroke="#569cd6" stroke-width="0.45" font-family="Liberation Mono" xml:space="preserve">title</text>
<text x="847.12" y="284.19" font-size="23.09" fill="#808080" stroke="#808080" stroke-width="0.45" font-family="Liberation Mono" xml:space="preserve">&gt;</text>
<text x="570.02" y="318.32" font-size="23.09" fill="#808080" stroke="#808080" stroke-width="0.45" font-family="Liberation Mono" xml:space="preserve">&lt;</text>
<text x="583.88" y="318.32" font-size="23.09" fill="#569cd6" stroke="#569cd6" stroke-width="0.45" font-family="Liberation Mono" xml:space="preserve">link</text>
<text x="653.15" y="318.32" font-size="23.09" fill="#9cdcfe" stroke="#9cdcfe" stroke-width="0.45" font-family="Liberation Mono" xml:space="preserve">rel</text>
<text x="694.72" y="318.32" font-size="23.09" fill="#d4d4d4" stroke="#d4d4d4" stroke-width="0.45" font-family="Liberation Mono" xml:space="preserve">=</text>
<text x="708.57" y="318.32" font-size="23.09" fill="#ce9178" stroke="#ce9178" stroke-width="0.45" font-family="Liberation Mono" xml:space="preserve">&#x27;stylesheet&#x27;</text>
<text x="888.69" y="318.32" font-size="23.09" fill="#9cdcfe" stroke="#9cdcfe" stroke-width="0.45" font-family="Liberation Mono" xml:space="preserve">href</text>
<text x="944.11" y="318.32" font-size="23.09" fill="#d4d4d4" stroke="#d4d4d4" stroke-width="0.45" font-family="Liberation Mono" xml:space="preserve">=</text>
<text x="957.96" y="318.32" font-size="23.09" fill="#ce9178" stroke="#ce9178" stroke-width="0.45" font-family="Liberation Mono" xml:space="preserve">&#x27;/stylesheets/style.css&#x27;</text>
<text x="1304.34" y="318.32" font-size="23.09" fill="#808080" stroke="#808080" stroke-width="0.45" font-family="Liberation Mono" xml:space="preserve">/&gt;</text>
<text x="542.31" y="352.45" font-size="23.09" fill="#808080" stroke="#808080" stroke-width="0.45" font-family="Liberation Mono" xml:space="preserve">&lt;/</text>
<text x="570.02" y="352.45" font-size="23.09" fill="#569cd6" stroke="#569cd6" stroke-width="0.45" font-family="Liberation Mono" xml:space="preserve">head</text>
<text x="625.44" y="352.45" font-size="23.09" fill="#808080" stroke="#808080" stroke-width="0.45" font-family="Liberation Mono" xml:space="preserve">&gt;</text>
<text x="542.31" y="386.58" font-size="23.09" fill="#808080" stroke="#808080" stroke-width="0.45" font-family="Liberation Mono" xml:space="preserve">&lt;</text>
<text x="556.17" y="386.58" font-size="23.09" fill="#569cd6" stroke="#569cd6" stroke-width="0.45" font-family="Liberation Mono" xml:space="preserve">body</text>
<text x="611.59" y="386.58" font-size="23.09" fill="#808080" stroke="#808080" stroke-width="0.45" font-family="Liberation Mono" xml:space="preserve">&gt;</text>
<text x="570.02" y="420.71" font-size="23.09" fill="#808080" stroke="#808080" stroke-width="0.45" font-family="Liberation Mono" xml:space="preserve">&lt;</text>
<text x="583.88" y="420.71" font-size="23.09" fill="#569cd6" stroke="#569cd6" stroke-width="0.45" font-family="Liberation Mono" xml:space="preserve">h1</text>
<text x="611.59" y="420.71" font-size="23.09" fill="#808080" stroke="#808080" stroke-width="0.45" font-family="Liberation Mono" xml:space="preserve">&gt;</text>
<text x="597.73" y="454.84" font-size="23.09" fill="#d4d4d4" stroke="#d4d4d4" stroke-width="0.45" font-family="Liberation Mono" xml:space="preserve">&lt;%</text>
<text x="639.30" y="454.84" font-size="23.09" fill="#c586c0" stroke="#c586c0" stroke-width="0.45" font-family="Liberation Mono" xml:space="preserve">if</text>
<text x="680.86" y="454.84" font-size="23.09" fill="#d4d4d4" stroke="#d4d4d4" stroke-width="0.45" font-family="Liberation Mono" xml:space="preserve">(</text>
<text x="694.72" y="454.84" font-size="23.09" fill="#9cdcfe" stroke="#9cdcfe" stroke-width="0.45" font-family="Liberation Mono" xml:space="preserve">locals</text>
<text x="777.85" y="454.84" font-size="23.09" fill="#d4d4d4" stroke="#d4d4d4" stroke-width="0.45" font-family="Liberation Mono" xml:space="preserve">.</text>
<text x="791.70" y="454.84" font-size="23.09" fill="#9cdcfe" stroke="#9cdcfe" stroke-width="0.45" font-family="Liberation Mono" xml:space="preserve">status</text>
<text x="888.69" y="454.84" font-size="23.09" fill="#d4d4d4" stroke="#d4d4d4" stroke-width="0.45" font-family="Liberation Mono" xml:space="preserve">===</text>
<text x="944.11" y="454.84" font-size="23.09" fill="#ce9178" stroke="#ce9178" stroke-width="0.45" font-family="Liberation Mono" xml:space="preserve">&quot;</text>
<path d="M966.86 437.34 a5.5 5.4 0 1 0 0.01 0 M977.36 436.44 V450.84 M977.36 443.64 H981.46 M962.96 451.54 V456.44 H978.56" stroke="#ce9178" stroke-width="1.8" fill="none"/>
<path d="M988.16 437.04 V445.54 H998.86 M1004.06 436.04 V449.04 M998.66 439.84 H1004.06 M998.66 443.64 H1004.06 M996.66 451.24 a7.7 2.8 0 1 0 0.01 0" stroke="#ce9178" stroke-width="1.8" fill="none"/>
<text x="1009.76" y="454.84" font-size="23.09" fill="#ce9178" stroke="#ce9178" stroke-width="0.45" font-family="Liberation Mono" xml:space="preserve">&quot;</text>
<text x="1023.62" y="454.84" font-size="23.09" fill="#d4d4d4" stroke="#d4d4d4" stroke-width="0.45" font-family="Liberation Mono" xml:space="preserve">) { %&gt;</text>
<path d="M1129.50 437.34 a5.5 5.4 0 1 0 0.01 0 M1140.00 436.44 V450.84 M1140.00 443.64 H1144.10 M1125.60 451.54 V456.44 H1141.20" stroke="#d4d4d4" stroke-width="1.8" fill="none"/>
<path d="M1150.80 437.04 V445.54 H1161.50 M1166.70 436.04 V449.04 M1161.30 439.84 H1166.70 M1161.30 443.64 H1166.70 M1159.30 451.24 a7.7 2.8 0 1 0 0.01 0" stroke="#d4d4d4" stroke-width="1.8" fill="none"/>
<path d="M1179.00 437.54 H1185.00 M1175.40 440.74 H1188.20 M1181.75 444.04 a5.2 4.9 0 1 0 0.01 0 M1191.90 436.14 V456.84 M1191.90 445.94 H1196.00" stroke="#d4d4d4" stroke-width="1.8" fill="none"/>
<path d="M1205.70 437.24 Q1205.30 448.24 1200.50 453.84 M1205.70 445.74 L1210.60 452.64 M1213.30 436.14 V456.14 M1209.90 444.74 H1213.30 M1219.30 436.14 V456.84" stroke="#d4d4d4" stroke-width="1.8" fill="none"/>
<path d="M1237.90 437.24 a8.1 5.1 0 1 0 0.01 0 M1234.70 447.44 V454.54 M1242.20 447.44 V454.54 M1228.00 454.54 H1247.90" stroke="#d4d4d4" stroke-width="1.8" fill="none"/>
<text x="1250.10" y="454.84" font-size="23.09" fill="#d4d4d4" stroke="#d4d4d4" stroke-width="0.45" font-family="Liberation Mono" xml:space="preserve">!!! &lt;% } %&gt;</text>
<text x="597.73" y="488.97" font-size="23.09" fill="#d4d4d4" stroke="#d4d4d4" stroke-width="0.45" font-family="Liberation Mono" xml:space="preserve">&lt;%</text>
<text x="639.30" y="488.97" font-size="23.09" fill="#c586c0" stroke="#c586c0" stroke-width="0.45" font-family="Liberation Mono" xml:space="preserve">if</text>
<text x="680.86" y="488.97" font-size="23.09" fill="#d4d4d4" stroke="#d4d4d4" stroke-width="0.45" font-family="Liberation Mono" xml:space="preserve">(</text>
<text x="694.72" y="488.97" font-size="23.09" fill="#9cdcfe" stroke="#9cdcfe" stroke-width="0.45" font-family="Liberation Mono" xml:space="preserve">locals</text>
<text x="777.85" y="488.97" font-size="23.09" fill="#d4d4d4" stroke="#d4d4d4" stroke-width="0.45" font-family="Liberation Mono" xml:space="preserve">.</text>
<text x="791.70" y="488.97" font-size="23.09" fill="#9cdcfe" stroke="#9cdcfe" stroke-width="0.45" font-family="Liberation Mono" xml:space="preserve">status</text>
<text x="888.69" y="488.97" font-size="23.09" fill="#d4d4d4" stroke="#d4d4d4" stroke-width="0.45" font-family="Liberation Mono" xml:space="preserve">===</text>
<text x="944.11" y="488.97" font-size="23.09" fill="#ce9178" stroke="#ce9178" stroke-width="0.45" font-family="Liberation Mono" xml:space="preserve">&quot;</text>
<path d="M961.86 472.17 V487.57 H971.16 V472.17 M961.86 479.67 H971.16 M976.96 471.27 V492.07 M976.96 480.57 H980.96" stroke="#ce9178" stroke-width="1.8" fill="none"/>
<path d="M992.56 472.17 a5.1 8.4 0 1 0 0.01 0 M1003.06 471.27 V492.07" stroke="#ce9178" stroke-width="1.8" fill="none"/>
<text x="1009.76" y="488.97" font-size="23.09" fill="#ce9178" stroke="#ce9178" stroke-width="0.45" font-family="Liberation Mono" xml:space="preserve">&quot;</text>
<text x="1023.62" y="488.97" font-size="23.09" fill="#d4d4d4" stroke="#d4d4d4" stroke-width="0.45" font-family="Liberation Mono" xml:space="preserve">) { %&gt;</text>
<path d="M1129.50 471.47 a5.5 5.4 0 1 0 0.01 0 M1140.00 470.57 V484.97 M1140.00 477.77 H1144.10 M1125.60 485.67 V490.57 H1141.20" stroke="#d4d4d4" stroke-width="1.8" fill="none"/>
<path d="M1150.80 471.17 V479.67 H1161.50 M1166.70 470.17 V483.17 M1161.30 473.97 H1166.70 M1161.30 477.77 H1166.70 M1159.30 485.37 a7.7 2.8 0 1 0 0.01 0" stroke="#d4d4d4" stroke-width="1.8" fill="none"/>
<path d="M1179.00 471.67 H1185.00 M1175.40 474.87 H1188.20 M1181.75 478.17 a5.2 4.9 0 1 0 0.01 0 M1191.90 470.27 V490.97" stroke="#d4d4d4" stroke-width="1.8" fill="none"/>
<path d="M1202.00 474.07 H1211.40 Q1210.90 484.37 1201.30 487.97 M1217.80 470.27 V490.97 M1217.80 479.67 H1221.90" stroke="#d4d4d4" stroke-width="1.8" fill="none"/>
<path d="M1231.60 471.37 Q1231.20 482.37 1226.40 487.97 M1231.60 479.87 L1236.50 486.77 M1239.20 470.27 V490.27 M1235.80 478.87 H1239.20 M1245.20 470.27 V490.97" stroke="#d4d4d4" stroke-width="1.8" fill="none"/>
<path d="M1263.80 471.37 a8.1 5.1 0 1 0 0.01 0 M1260.60 481.57 V488.67 M1268.10 481.57 V488.67 M1253.90 488.67 H1273.80" stroke="#d4d4d4" stroke-width="1.8" fill="none"/>
<text x="1276.00" y="488.97" font-size="23.09" fill="#d4d4d4" stroke="#d4d4d4" stroke-width="0.45" font-family="Liberation Mono" xml:space="preserve">!!! &lt;% } %&gt;</text>
<text x="570.02" y="523.10" font-size="23.09" fill="#808080" stroke="#808080" stroke-width="0.45" font-family="Liberation Mono" xml:space="preserve">&lt;/</text>
<text x="597.73" y="523.10" font-size="23.09" fill="#569cd6" stroke="#569cd6" stroke-width="0.45" font-family="Liberation Mono" xml:space="preserve">h1</text>
<text x="625.44" y="523.10" font-size="23.09" fill="#808080" stroke="#808080" stroke-width="0.45" font-family="Liberation Mono" xml:space="preserve">&gt;</text>
<text x="542.31" y="557.23" font-size="23.09" fill="#808080" stroke="#808080" stroke-width="0.45" font-family="Liberation Mono" xml:space="preserve">&lt;/</text>
<text x="570.02" y="557.23" font-size="23.09" fill="#569cd6" stroke="#569cd6" stroke-width="0.45" font-family="Liberation Mono" xml:space="preserve">body</text>
<text x="625.44" y="557.23" font-size="23.09" fill="#808080" stroke="#808080" stroke-width="0.45" font-family="Liberation Mono" xml:space="preserve">&gt;</text>
<text x="514.60" y="591.36" font-size="23.09" fill="#808080" stroke="#808080" stroke-width="0.45" font-family="Liberation Mono" xml:space="preserve">&lt;/</text>
<text x="542.31" y="591.36" font-size="23.09" fill="#569cd6" stroke="#569cd6" stroke-width="0.45" font-family="Liberation Mono" xml:space="preserve">html</text>
<text x="597.73" y="591.36" font-size="23.09" fill="#808080" stroke="#808080" stroke-width="0.45" font-family="Liberation Mono" xml:space="preserve">&gt;</text>
<text x="454.34" y="181.80" font-size="23.09" fill="#858585" stroke="#858585" stroke-width="0.45" font-family="Liberation Mono">1</text>
<text x="454.34" y="215.93" font-size="23.09" fill="#858585" stroke="#858585" stroke-width="0.45" font-family="Liberation Mono">2</text>
<text x="454.34" y="250.06" font-size="23.09" fill="#858585" stroke="#858585" stroke-width="0.45" font-family="Liberation Mono">3</text>
<text x="454.34" y="284.19" font-size="23.09" fill="#858585" stroke="#858585" stroke-width="0.45" font-family="Liberation Mono">4</text>
<text x="454.34" y="318.32" font-size="23.09" fill="#858585" stroke="#858585" stroke-width="0.45" font-family="Liberation Mono">5</text>
<text x="454.34" y="352.45" font-size="23.09" fill="#858585" stroke="#858585" stroke-width="0.45" font-family="Liberation Mono">6</text>
<text x="454.34" y="386.58" font-size="23.09" fill="#858585" stroke="#858585" stroke-width="0.45" font-family="Liberation Mono">7</text>
<text x="454.34" y="420.71" font-size="23.09" fill="#858585" stroke="#858585" stroke-width="0.45" font-family="Liberation Mono">8</text>
<text x="454.34" y="454.84" font-size="23.09" fill="#858585" stroke="#858585" stroke-width="0.45" font-family="Liberation Mono">9</text>
<text x="440.49" y="488.97" font-size="23.09" fill="#c6c6c6" stroke="#c6c6c6" stroke-width="0.45" font-family="Liberation Mono">10</text>
<text x="440.49" y="523.10" font-size="23.09" fill="#858585" stroke="#858585" stroke-width="0.45" font-family="Liberation Mono">11</text>
<text x="440.49" y="557.23" font-size="23.09" fill="#858585" stroke="#858585" stroke-width="0.45" font-family="Liberation Mono">12</text>
<text x="440.49" y="591.36" font-size="23.09" fill="#858585" stroke="#858585" stroke-width="0.45" font-family="Liberation Mono">13</text>
<text x="440.49" y="625.49" font-size="23.09" fill="#858585" stroke="#858585" stroke-width="0.45" font-family="Liberation Mono">14</text>
<rect x="2051.21" y="328.05" width="12.86" height="33.13" fill="#0064001a" stroke="#888888" stroke-width="1"/>
<rect x="1829.53" y="396.31" width="12.86" height="33.13" fill="#0064001a" stroke="#888888" stroke-width="1"/>
<svg x="1625" y="156" width="564" height="660" overflow="hidden">
<g transform="translate(-1625,-156)">
<text x="1745.90" y="181.80" font-size="23.09" fill="#569cd6" stroke="#569cd6" stroke-width="0.45" font-family="Liberation Mono" xml:space="preserve">var</text>
<text x="1801.32" y="181.80" font-size="23.09" fill="#dcdcaa" stroke="#dcdcaa" stroke-width="0.45" font-family="Liberation Mono" xml:space="preserve">express</text>
<text x="1912.16" y="181.80" font-size="23.09" fill="#d4d4d4" stroke="#d4d4d4" stroke-width="0.45" font-family="Liberation Mono" xml:space="preserve">=</text>
<text x="1939.87" y="181.80" font-size="23.09" fill="#dcdcaa" stroke="#dcdcaa" stroke-width="0.45" font-family="Liberation Mono" xml:space="preserve">require</text>
<text x="2036.86" y="181.80" font-size="23.09" fill="#d4d4d4" stroke="#d4d4d4" stroke-width="0.45" font-family="Liberation Mono" xml:space="preserve">(</text>
<text x="2050.71" y="181.80" font-size="23.09" fill="#ce9178" stroke="#ce9178" stroke-width="0.45" font-family="Liberation Mono" xml:space="preserve">&#x27;express&#x27;</text>
<text x="2175.41" y="181.80" font-size="23.09" fill="#d4d4d4" stroke="#d4d4d4" stroke-width="0.45" font-family="Liberation Mono" xml:space="preserve">);</text>
<text x="1745.90" y="215.93" font-size="23.09" fill="#569cd6" stroke="#569cd6" stroke-width="0.45" font-family="Liberation Mono" xml:space="preserve">var</text>
<text x="1801.32" y="215.93" font-size="23.09" fill="#9cdcfe" stroke="#9cdcfe" stroke-width="0.45" font-family="Liberation Mono" xml:space="preserve">router</text>
<text x="1898.31" y="215.93" font-size="23.09" fill="#d4d4d4" stroke="#d4d4d4" stroke-width="0.45" font-family="Liberation Mono" xml:space="preserve">=</text>
<text x="1926.02" y="215.93" font-size="23.09" fill="#dcdcaa" stroke="#dcdcaa" stroke-width="0.45" font-family="Liberation Mono" xml:space="preserve">express</text>
<text x="2023.00" y="215.93" font-size="23.09" fill="#d4d4d4" stroke="#d4d4d4" stroke-width="0.45" font-family="Liberation Mono" xml:space="preserve">.</text>
<text x="2036.86" y="215.93" font-size="23.09" fill="#dcdcaa" stroke="#dcdcaa" stroke-width="0.45" font-family="Liberation Mono" xml:space="preserve">Router</text>
<text x="2119.99" y="215.93" font-size="23.09" fill="#d4d4d4" stroke="#d4d4d4" stroke-width="0.45" font-family="Liberation Mono" xml:space="preserve">();</text>
<text x="1745.90" y="284.19" font-size="23.09" fill="#6a9955" stroke="#6a9955" stroke-width="0.45" font-family="Liberation Mono" xml:space="preserve">/* GET home page. */</text>
<text x="1745.90" y="318.32" font-size="23.09" fill="#9cdcfe" stroke="#9cdcfe" stroke-width="0.45" font-family="Liberation Mono" xml:space="preserve">router</text>
<text x="1829.03" y="318.32" font-size="23.09" fill="#d4d4d4" stroke="#d4d4d4" stroke-width="0.45" font-family="Liberation Mono" xml:space="preserve">.</text>
<text x="1842.89" y="318.32" font-size="23.09" fill="#dcdcaa" stroke="#dcdcaa" stroke-width="0.45" font-family="Liberation Mono" xml:space="preserve">get</text>
<text x="1884.45" y="318.32" font-size="23.09" fill="#d4d4d4" stroke="#d4d4d4" stroke-width="0.45" font-family="Liberation Mono" xml:space="preserve">(</text>
<text x="1898.31" y="318.32" font-size="23.09" fill="#ce9178" stroke="#ce9178" stroke-width="0.45" font-family="Liberation Mono" xml:space="preserve">&#x27;/&#x27;</text>
<text x="1939.87" y="318.32" font-size="23.09" fill="#d4d4d4" stroke="#d4d4d4" stroke-width="0.45" font-family="Liberation Mono" xml:space="preserve">,</text>
<text x="1967.58" y="318.32" font-size="23.09" fill="#569cd6" stroke="#569cd6" stroke-width="0.45" font-family="Liberation Mono" xml:space="preserve">function</text>
<text x="2078.42" y="318.32" font-size="23.09" fill="#d4d4d4" stroke="#d4d4d4" stroke-width="0.45" font-family="Liberation Mono" xml:space="preserve">(</text>
<text x="2092.28" y="318.32" font-size="23.09" fill="#8fb8cf" stroke="#8fb8cf" stroke-width="0.45" font-family="Liberation Mono" xml:space="preserve">req</text>
<text x="2133.84" y="318.32" font-size="23.09" fill="#d4d4d4" stroke="#d4d4d4" stroke-width="0.45" font-family="Liberation Mono" xml:space="preserve">,</text>
<text x="2161.55" y="318.32" font-size="23.09" fill="#9cdcfe" stroke="#9cdcfe" stroke-width="0.45" font-family="Liberation Mono" xml:space="preserve">res, next) {</text>
<text x="1773.61" y="352.45" font-size="23.09" fill="#9cdcfe" stroke="#9cdcfe" stroke-width="0.45" font-family="Liberation Mono" xml:space="preserve">res</text>
<text x="1815.18" y="352.45" font-size="23.09" fill="#d4d4d4" stroke="#d4d4d4" stroke-width="0.45" font-family="Liberation Mono" xml:space="preserve">.</text>
<text x="1829.03" y="352.45" font-size="23.09" fill="#dcdcaa" stroke="#dcdcaa" stroke-width="0.45" font-family="Liberation Mono" xml:space="preserve">render</text>
<text x="1912.16" y="352.45" font-size="23.09" fill="#d4d4d4" stroke="#d4d4d4" stroke-width="0.45" font-family="Liberation Mono" xml:space="preserve">(</text>
<text x="1926.02" y="352.45" font-size="23.09" fill="#ce9178" stroke="#ce9178" stroke-width="0.45" font-family="Liberation Mono" xml:space="preserve">&#x27;index&#x27;</text>
<text x="2023.00" y="352.45" font-size="23.09" fill="#d4d4d4" stroke="#d4d4d4" stroke-width="0.45" font-family="Liberation Mono" xml:space="preserve">, {</text>
<text x="1829.03" y="386.58" font-size="23.09" fill="#9cdcfe" stroke="#9cdcfe" stroke-width="0.45" font-family="Liberation Mono" xml:space="preserve">status</text>
<text x="1926.02" y="386.58" font-size="23.09" fill="#d4d4d4" stroke="#d4d4d4" stroke-width="0.45" font-family="Liberation Mono" xml:space="preserve">:</text>
<text x="1953.73" y="386.58" font-size="23.09" fill="#ce9178" stroke="#ce9178" stroke-width="0.45" font-family="Liberation Mono" xml:space="preserve">&quot;</text>
<path d="M1971.48 369.78 V385.18 H1980.78 V369.78 M1971.48 377.28 H1980.78 M1986.58 368.88 V389.68 M1986.58 378.18 H1990.58" stroke="#ce9178" stroke-width="1.8" fill="none"/>
<path d="M2002.18 369.78 a5.1 8.4 0 1 0 0.01 0 M2012.68 368.88 V389.68" stroke="#ce9178" stroke-width="1.8" fill="none"/>
<text x="2019.38" y="386.58" font-size="23.09" fill="#ce9178" stroke="#ce9178" stroke-width="0.45" font-family="Liberation Mono" xml:space="preserve">&quot;</text>
<text x="2033.24" y="386.58" font-size="23.09" fill="#d4d4d4" stroke="#d4d4d4" stroke-width="0.45" font-family="Liberation Mono" xml:space="preserve">,</text>
<text x="1829.03" y="420.71" font-size="23.09" fill="#d4d4d4" stroke="#d4d4d4" stroke-width="0.45" font-family="Liberation Mono" xml:space="preserve">});</text>
<text x="1745.90" y="454.84" font-size="23.09" fill="#d4d4d4" stroke="#d4d4d4" stroke-width="0.45" font-family="Liberation Mono" xml:space="preserve">});</text>
<text x="1745.90" y="523.10" font-size="23.09" fill="#9cdcfe" stroke="#9cdcfe" stroke-width="0.45" font-family="Liberation Mono" xml:space="preserve">module</text>
<text x="1829.03" y="523.10" font-size="23.09" fill="#d4d4d4" stroke="#d4d4d4" stroke-width="0.45" font-family="Liberation Mono" xml:space="preserve">.</text>
<text x="1842.89" y="523.10" font-size="23.09" fill="#9cdcfe" stroke="#9cdcfe" stroke-width="0.45" font-family="Liberation Mono" xml:space="preserve">exports</text>
<text x="1953.73" y="523.10" font-size="23.09" fill="#d4d4d4" stroke="#d4d4d4" stroke-width="0.45" font-family="Liberation Mono" xml:space="preserve">=</text>
<text x="1981.44" y="523.10" font-size="23.09" fill="#9cdcfe" stroke="#9cdcfe" stroke-width="0.45" font-family="Liberation Mono" xml:space="preserve">router</text>
<text x="2064.57" y="523.10" font-size="23.09" fill="#d4d4d4" stroke="#d4d4d4" stroke-width="0.45" font-family="Liberation Mono" xml:space="preserve">;</text>
</g></svg>
<circle cx="1942" cy="186.8" r="1.6" fill="#8a8a8a"/>
<circle cx="1948.6" cy="186.8" r="1.6" fill="#8a8a8a"/>
<circle cx="1955.2" cy="186.8" r="1.6" fill="#8a8a8a"/>
<text x="1685.35" y="181.80" font-size="23.09" fill="#858585" stroke="#858585" stroke-width="0.45" font-family="Liberation Mono">1</text>
<text x="1685.35" y="215.93" font-size="23.09" fill="#858585" stroke="#858585" stroke-width="0.45" font-family="Liberation Mono">2</text>
<text x="1685.35" y="250.06" font-size="23.09" fill="#858585" stroke="#858585" stroke-width="0.45" font-family="Liberation Mono">3</text>
<text x="1685.35" y="284.19" font-size="23.09" fill="#858585" stroke="#858585" stroke-width="0.45" font-family="Liberation Mono">4</text>
<text x="1685.35" y="318.32" font-size="23.09" fill="#858585" stroke="#858585" stroke-width="0.45" font-family="Liberation Mono">5</text>
<text x="1685.35" y="352.45" font-size="23.09" fill="#858585" stroke="#858585" stroke-width="0.45" font-family="Liberation Mono">6</text>
<text x="1685.35" y="386.58" font-size="23.09" fill="#c6c6c6" stroke="#c6c6c6" stroke-width="0.45" font-family="Liberation Mono">7</text>
<text x="1685.35" y="420.71" font-size="23.09" fill="#858585" stroke="#858585" stroke-width="0.45" font-family="Liberation Mono">8</text>
<text x="1685.35" y="454.84" font-size="23.09" fill="#858585" stroke="#858585" stroke-width="0.45" font-family="Liberation Mono">9</text>
<text x="1671.49" y="488.97" font-size="23.09" fill="#858585" stroke="#858585" stroke-width="0.45" font-family="Liberation Mono">10</text>
<text x="1671.49" y="523.10" font-size="23.09" fill="#858585" stroke="#858585" stroke-width="0.45" font-family="Liberation Mono">11</text>
<text x="1671.49" y="557.23" font-size="23.09" fill="#858585" stroke="#858585" stroke-width="0.45" font-family="Liberation Mono">12</text>
<rect x="1520.00" y="157.40" width="2.00" height="1.33" fill="#808080" opacity="0.45"/>
<rect x="1522.00" y="157.40" width="7.00" height="1.33" fill="#569cd6" opacity="0.45"/>
<rect x="1530.00" y="157.40" width="4.00" height="1.33" fill="#9cdcfe" opacity="0.45"/>
<rect x="1534.00" y="157.40" width="1.00" height="1.33" fill="#808080" opacity="0.45"/>
<rect x="1520.00" y="159.43" width="1.00" height="1.33" fill="#808080" opacity="0.45"/>
<rect x="1521.00" y="159.43" width="4.00" height="1.33" fill="#569cd6" opacity="0.45"/>
<rect x="1525.00" y="159.43" width="1.00" height="1.33" fill="#808080" opacity="0.45"/>
<rect x="1522.00" y="161.46" width="1.00" height="1.33" fill="#808080" opacity="0.45"/>
<rect x="1523.00" y="161.46" width="4.00" height="1.33" fill="#569cd6" opacity="0.45"/>
<rect x="1527.00" y="161.46" width="1.00" height="1.33" fill="#808080" opacity="0.45"/>
<rect x="1524.00" y="163.49" width="1.00" height="1.33" fill="#808080" opacity="0.45"/>
<rect x="1525.00" y="163.49" width="5.00" height="1.33" fill="#569cd6" opacity="0.45"/>
<rect x="1530.00" y="163.49" width="1.00" height="1.33" fill="#808080" opacity="0.45"/>
<rect x="1531.00" y="163.49" width="6.00" height="1.33" fill="#d4d4d4" opacity="0.45"/>
<rect x="1537.00" y="163.49" width="2.00" height="1.33" fill="#808080" opacity="0.45"/>
<rect x="1539.00" y="163.49" width="5.00" height="1.33" fill="#569cd6" opacity="0.45"/>
<rect x="1544.00" y="163.49" width="1.00" height="1.33" fill="#808080" opacity="0.45"/>
<rect x="1524.00" y="165.52" width="1.00" height="1.33" fill="#808080" opacity="0.45"/>
<rect x="1525.00" y="165.52" width="4.00" height="1.33" fill="#569cd6" opacity="0.45"/>
<rect x="1530.00" y="165.52" width="3.00" height="1.33" fill="#9cdcfe" opacity="0.45"/>
<rect x="1533.00" y="165.52" width="1.00" height="1.33" fill="#d4d4d4" opacity="0.45"/>
<rect x="1534.00" y="165.52" width="12.00" height="1.33" fill="#ce9178" opacity="0.45"/>
<rect x="1547.00" y="165.52" width="4.00" height="1.33" fill="#9cdcfe" opacity="0.45"/>
<rect x="1551.00" y="165.52" width="1.00" height="1.33" fill="#d4d4d4" opacity="0.45"/>
<rect x="1552.00" y="165.52" width="24.00" height="1.33" fill="#ce9178" opacity="0.45"/>
<rect x="1577.00" y="165.52" width="2.00" height="1.33" fill="#808080" opacity="0.45"/>
<rect x="1522.00" y="167.55" width="2.00" height="1.33" fill="#808080" opacity="0.45"/>
<rect x="1524.00" y="167.55" width="4.00" height="1.33" fill="#569cd6" opacity="0.45"/>
<rect x="1528.00" y="167.55" width="1.00" height="1.33" fill="#808080" opacity="0.45"/>
<rect x="1522.00" y="169.58" width="1.00" height="1.33" fill="#808080" opacity="0.45"/>
<rect x="1523.00" y="169.58" width="4.00" height="1.33" fill="#569cd6" opacity="0.45"/>
<rect x="1527.00" y="169.58" width="1.00" height="1.33" fill="#808080" opacity="0.45"/>
<rect x="1524.00" y="171.61" width="1.00" height="1.33" fill="#808080" opacity="0.45"/>
<rect x="1525.00" y="171.61" width="2.00" height="1.33" fill="#569cd6" opacity="0.45"/>
<rect x="1527.00" y="171.61" width="1.00" height="1.33" fill="#808080" opacity="0.45"/>
<rect x="1526.00" y="173.64" width="2.00" height="1.33" fill="#d4d4d4" opacity="0.45"/>
<rect x="1529.00" y="173.64" width="2.00" height="1.33" fill="#c586c0" opacity="0.45"/>
<rect x="1532.00" y="173.64" width="1.00" height="1.33" fill="#d4d4d4" opacity="0.45"/>
<rect x="1533.00" y="173.64" width="6.00" height="1.33" fill="#9cdcfe" opacity="0.45"/>
<rect x="1539.00" y="173.64" width="1.00" height="1.33" fill="#d4d4d4" opacity="0.45"/>
<rect x="1540.00" y="173.64" width="6.00" height="1.33" fill="#9cdcfe" opacity="0.45"/>
<rect x="1547.00" y="173.64" width="3.00" height="1.33" fill="#d4d4d4" opacity="0.45"/>
<rect x="1551.00" y="173.64" width="6.00" height="1.33" fill="#ce9178" opacity="0.45"/>
<rect x="1557.00" y="173.64" width="1.00" height="1.33" fill="#d4d4d4" opacity="0.45"/>
<rect x="1559.00" y="173.64" width="1.00" height="1.33" fill="#d4d4d4" opacity="0.45"/>
<rect x="1561.00" y="173.64" width="2.00" height="1.33" fill="#d4d4d4" opacity="0.45"/>
<rect x="1564.00" y="173.64" width="13.00" height="1.33" fill="#d4d4d4" opacity="0.45"/>
<rect x="1578.00" y="173.64" width="2.00" height="1.33" fill="#d4d4d4" opacity="0.45"/>
<rect x="1581.00" y="173.64" width="1.00" height="1.33" fill="#d4d4d4" opacity="0.45"/>
<rect x="1583.00" y="173.64" width="2.00" height="1.33" fill="#d4d4d4" opacity="0.45"/>
<rect x="1526.00" y="175.67" width="2.00" height="1.33" fill="#d4d4d4" opacity="0.45"/>
<rect x="1529.00" y="175.67" width="2.00" height="1.33" fill="#c586c0" opacity="0.45"/>
<rect x="1532.00" y="175.67" width="1.00" height="1.33" fill="#d4d4d4" opacity="0.45"/>
<rect x="1533.00" y="175.67" width="6.00" height="1.33" fill="#9cdcfe" opacity="0.45"/>
<rect x="1539.00" y="175.67" width="1.00" height="1.33" fill="#d4d4d4" opacity="0.45"/>
<rect x="1540.00" y="175.67" width="6.00" height="1.33" fill="#9cdcfe" opacity="0.45"/>
<rect x="1547.00" y="175.67" width="3.00" height="1.33" fill="#d4d4d4" opacity="0.45"/>
<rect x="1551.00" y="175.67" width="6.00" height="1.33" fill="#ce9178" opacity="0.45"/>
<rect x="1557.00" y="175.67" width="1.00" height="1.33" fill="#d4d4d4" opacity="0.45"/>
<rect x="1559.00" y="175.67" width="1.00" height="1.33" fill="#d4d4d4" opacity="0.45"/>
<rect x="1561.00" y="175.67" width="2.00" height="1.33" fill="#d4d4d4" opacity="0.45"/>
<rect x="1564.00" y="175.67" width="15.00" height="1.33" fill="#d4d4d4" opacity="0.45"/>
<rect x="1580.00" y="175.67" width="2.00" height="1.33" fill="#d4d4d4" opacity="0.45"/>
<rect x="1583.00" y="175.67" width="1.00" height="1.33" fill="#d4d4d4" opacity="0.45"/>
<rect x="1585.00" y="175.67" width="2.00" height="1.33" fill="#d4d4d4" opacity="0.45"/>
<rect x="1524.00" y="177.70" width="2.00" height="1.33" fill="#808080" opacity="0.45"/>
<rect x="1526.00" y="177.70" width="2.00" height="1.33" fill="#569cd6" opacity="0.45"/>
<rect x="1528.00" y="177.70" width="1.00" height="1.33" fill="#808080" opacity="0.45"/>
<rect x="1522.00" y="179.73" width="2.00" height="1.33" fill="#808080" opacity="0.45"/>
<rect x="1524.00" y="179.73" width="4.00" height="1.33" fill="#569cd6" opacity="0.45"/>
<rect x="1528.00" y="179.73" width="1.00" height="1.33" fill="#808080" opacity="0.45"/>
<rect x="1520.00" y="181.76" width="2.00" height="1.33" fill="#808080" opacity="0.45"/>
<rect x="1522.00" y="181.76" width="4.00" height="1.33" fill="#569cd6" opacity="0.45"/>
<rect x="1526.00" y="181.76" width="1.00" height="1.33" fill="#808080" opacity="0.45"/>
<rect x="2197.00" y="157.40" width="3.00" height="1.33" fill="#569cd6" opacity="0.45"/>
<rect x="2201.00" y="157.40" width="7.00" height="1.33" fill="#dcdcaa" opacity="0.45"/>
<rect x="2209.00" y="157.40" width="1.00" height="1.33" fill="#d4d4d4" opacity="0.45"/>
<rect x="2211.00" y="157.40" width="7.00" height="1.33" fill="#dcdcaa" opacity="0.45"/>
<rect x="2218.00" y="157.40" width="1.00" height="1.33" fill="#d4d4d4" opacity="0.45"/>
<rect x="2219.00" y="157.40" width="9.00" height="1.33" fill="#ce9178" opacity="0.45"/>
<rect x="2228.00" y="157.40" width="2.00" height="1.33" fill="#d4d4d4" opacity="0.45"/>
<rect x="2197.00" y="159.43" width="3.00" height="1.33" fill="#569cd6" opacity="0.45"/>
<rect x="2201.00" y="159.43" width="6.00" height="1.33" fill="#9cdcfe" opacity="0.45"/>
<rect x="2208.00" y="159.43" width="1.00" height="1.33" fill="#d4d4d4" opacity="0.45"/>
<rect x="2210.00" y="159.43" width="7.00" height="1.33" fill="#dcdcaa" opacity="0.45"/>
<rect x="2217.00" y="159.43" width="1.00" height="1.33" fill="#d4d4d4" opacity="0.45"/>
<rect x="2218.00" y="159.43" width="6.00" height="1.33" fill="#dcdcaa" opacity="0.45"/>
<rect x="2224.00" y="159.43" width="3.00" height="1.33" fill="#d4d4d4" opacity="0.45"/>
<rect x="2197.00" y="163.49" width="2.00" height="1.33" fill="#6a9955" opacity="0.45"/>
<rect x="2200.00" y="163.49" width="3.00" height="1.33" fill="#6a9955" opacity="0.45"/>
<rect x="2204.00" y="163.49" width="4.00" height="1.33" fill="#6a9955" opacity="0.45"/>
<rect x="2209.00" y="163.49" width="5.00" height="1.33" fill="#6a9955" opacity="0.45"/>
<rect x="2215.00" y="163.49" width="2.00" height="1.33" fill="#6a9955" opacity="0.45"/>
<rect x="2197.00" y="165.52" width="6.00" height="1.33" fill="#9cdcfe" opacity="0.45"/>
<rect x="2203.00" y="165.52" width="1.00" height="1.33" fill="#d4d4d4" opacity="0.45"/>
<rect x="2204.00" y="165.52" width="3.00" height="1.33" fill="#dcdcaa" opacity="0.45"/>
<rect x="2207.00" y="165.52" width="1.00" height="1.33" fill="#d4d4d4" opacity="0.45"/>
<rect x="2208.00" y="165.52" width="3.00" height="1.33" fill="#ce9178" opacity="0.45"/>
<rect x="2211.00" y="165.52" width="1.00" height="1.33" fill="#d4d4d4" opacity="0.45"/>
<rect x="2213.00" y="165.52" width="8.00" height="1.33" fill="#569cd6" opacity="0.45"/>
<rect x="2221.00" y="165.52" width="1.00" height="1.33" fill="#d4d4d4" opacity="0.45"/>
<rect x="2222.00" y="165.52" width="3.00" height="1.33" fill="#8fb8cf" opacity="0.45"/>
<rect x="2225.00" y="165.52" width="1.00" height="1.33" fill="#d4d4d4" opacity="0.45"/>
<rect x="2227.00" y="165.52" width="4.00" height="1.33" fill="#9cdcfe" opacity="0.45"/>
<rect x="2232.00" y="165.52" width="4.00" height="1.33" fill="#9cdcfe" opacity="0.45"/>
<rect x="2199.00" y="167.55" width="3.00" height="1.33" fill="#9cdcfe" opacity="0.45"/>
<rect x="2202.00" y="167.55" width="1.00" height="1.33" fill="#d4d4d4" opacity="0.45"/>
<rect x="2203.00" y="167.55" width="6.00" height="1.33" fill="#dcdcaa" opacity="0.45"/>
<rect x="2209.00" y="167.55" width="1.00" height="1.33" fill="#d4d4d4" opacity="0.45"/>
<rect x="2210.00" y="167.55" width="7.00" height="1.33" fill="#ce9178" opacity="0.45"/>
<rect x="2217.00" y="167.55" width="1.00" height="1.33" fill="#d4d4d4" opacity="0.45"/>
<rect x="2219.00" y="167.55" width="1.00" height="1.33" fill="#d4d4d4" opacity="0.45"/>
<rect x="2203.00" y="169.58" width="6.00" height="1.33" fill="#9cdcfe" opacity="0.45"/>
<rect x="2210.00" y="169.58" width="1.00" height="1.33" fill="#d4d4d4" opacity="0.45"/>
<rect x="2212.00" y="169.58" width="6.00" height="1.33" fill="#ce9178" opacity="0.45"/>
<rect x="2218.00" y="169.58" width="1.00" height="1.33" fill="#d4d4d4" opacity="0.45"/>
<rect x="2203.00" y="171.61" width="3.00" height="1.33" fill="#d4d4d4" opacity="0.45"/>
<rect x="2197.00" y="173.64" width="3.00" height="1.33" fill="#d4d4d4" opacity="0.45"/>
<rect x="2197.00" y="177.70" width="6.00" height="1.33" fill="#9cdcfe" opacity="0.45"/>
<rect x="2203.00" y="177.70" width="1.00" height="1.33" fill="#d4d4d4" opacity="0.45"/>
<rect x="2204.00" y="177.70" width="7.00" height="1.33" fill="#9cdcfe" opacity="0.45"/>
<rect x="2212.00" y="177.70" width="1.00" height="1.33" fill="#d4d4d4" opacity="0.45"/>
<rect x="2214.00" y="177.70" width="6.00" height="1.33" fill="#9cdcfe" opacity="0.45"/>
<rect x="2220.00" y="177.70" width="1.00" height="1.33" fill="#d4d4d4" opacity="0.45"/>
<text transform="translate(428.00,853.20) scale(0.9009,1)" font-size="19.30" fill="#969696" stroke="#969696" stroke-width="0.3" font-family="Liberation Sans" >PROBLEMS</text>
<text transform="translate(560.06,853.20) scale(0.9359,1)" font-size="19.30" fill="#969696" stroke="#969696" stroke-width="0.3" font-family="Liberation Sans" >OUTPUT</text>
<text transform="translate(670.89,853.20) scale(0.9132,1)" font-size="19.30" fill="#969696" stroke="#969696" stroke-width="0.3" font-family="Liberation Sans" >DEBUG CONSOLE</text>
<text transform="translate(861.50,853.20) scale(0.9433,1)" font-size="19.30" fill="#e7e7e7" stroke="#e7e7e7" stroke-width="0.3" font-family="Liberation Sans" >TERMINAL</text>
<text transform="translate(1650.67,855.20) scale(1.0307,1)" font-size="22.80" fill="#f0f0f0" stroke="#f0f0f0" stroke-width="0.3" font-family="Liberation Sans" >2: node</text>
<path d="M1909 840.6 L1917 848.6 L1925 840.6" stroke="#c5c5c5" stroke-width="2.0" fill="none" stroke-linejoin="round" stroke-linejoin="miter"/>
<line x1="1971.40" y1="844.80" x2="1995.20" y2="844.80" stroke="#c5c5c5" stroke-width="2.2" stroke-linecap="butt" />
<line x1="1983.30" y1="833.00" x2="1983.30" y2="856.50" stroke="#c5c5c5" stroke-width="2.2" stroke-linecap="butt" />
<rect x="2031" y="834.2" width="22.8" height="21.4" rx="1.5" fill="none" stroke="#c5c5c5" stroke-width="2.2"/>
<line x1="2042.40" y1="834.20" x2="2042.40" y2="855.60" stroke="#c5c5c5" stroke-width="2.2" stroke-linecap="butt" />
<path d="M2088.3 837.2 H2107.7 M2094.4 837 V833.4 H2102.5 V837 M2090.8 837.5 V853.5 Q2090.8 855.8 2093 855.8 H2103.8 Q2106 855.8 2106 853.5 V837.5 M2095.2 840.5 V852.8 M2098.4 840.5 V852.8 M2101.6 840.5 V852.8" stroke="#c5c5c5" stroke-width="1.9" fill="none" stroke-linejoin="round" />
<path d="M2147.7 849.1 L2156.4 840.4 L2165.1 849.1" stroke="#c5c5c5" stroke-width="2.0" fill="none" stroke-linejoin="round" stroke-linejoin="miter"/>
<line x1="2206.60" y1="838.30" x2="2221.50" y2="852.80" stroke="#c5c5c5" stroke-width="2.0" stroke-linecap="butt" />
<line x1="2221.50" y1="838.30" x2="2206.60" y2="852.80" stroke="#c5c5c5" stroke-width="2.0" stroke-linecap="butt" />
<text x="428.20" y="912.90" font-size="21.67" fill="#2472c8" stroke="#2472c8" stroke-width="0.45" font-family="Liberation Mono" textLength="38.99" lengthAdjust="spacing" xml:space="preserve">PM2</text>
<rect x="550.50" y="893.30" width="2.4" height="25.1" fill="#2472c8"/>
<text x="571.20" y="912.90" font-size="21.67" fill="#cccccc" stroke="#cccccc" stroke-width="0.45" font-family="Liberation Mono" textLength="675.99" lengthAdjust="spacing" xml:space="preserve">App [www:0] exited with code [0] via signal [SIGINT]</text>
<text x="428.20" y="943.90" font-size="21.67" fill="#2472c8" stroke="#2472c8" stroke-width="0.45" font-family="Liberation Mono" textLength="38.99" lengthAdjust="spacing" xml:space="preserve">PM2</text>
<rect x="550.50" y="924.30" width="2.4" height="25.1" fill="#2472c8"/>
<text x="571.20" y="943.90" font-size="21.67" fill="#cccccc" stroke="#cccccc" stroke-width="0.45" font-family="Liberation Mono" textLength="376.99" lengthAdjust="spacing" xml:space="preserve">pid=753528 msg=process killed</text>
<text x="428.20" y="974.90" font-size="21.67" fill="#2472c8" stroke="#2472c8" stroke-width="0.45" font-family="Liberation Mono" textLength="38.99" lengthAdjust="spacing" xml:space="preserve">PM2</text>
<rect x="550.50" y="955.30" width="2.4" height="25.1" fill="#2472c8"/>
<text x="571.20" y="974.90" font-size="21.67" fill="#cccccc" stroke="#cccccc" stroke-width="0.45" font-family="Liberation Mono" textLength="454.99" lengthAdjust="spacing" xml:space="preserve">App [www:0] starting in -fork mode-</text>
<text x="428.20" y="1005.90" font-size="21.67" fill="#2472c8" stroke="#2472c8" stroke-width="0.45" font-family="Liberation Mono" textLength="38.99" lengthAdjust="spacing" xml:space="preserve">PM2</text>
<rect x="550.50" y="986.30" width="2.4" height="25.1" fill="#2472c8"/>
<text x="571.20" y="1005.90" font-size="21.67" fill="#cccccc" stroke="#cccccc" stroke-width="0.45" font-family="Liberation Mono" textLength="233.99" lengthAdjust="spacing" xml:space="preserve">App [www:0] online</text>
<text x="428.20" y="1036.90" font-size="21.67" fill="#0dbc79" stroke="#0dbc79" stroke-width="0.45" font-family="Liberation Mono" textLength="12.99" lengthAdjust="spacing" xml:space="preserve">0</text>
<rect x="446.50" y="1017.30" width="2.4" height="25.1" fill="#0dbc79"/>
<text x="454.20" y="1036.90" font-size="21.67" fill="#0dbc79" stroke="#0dbc79" stroke-width="0.45" font-family="Liberation Mono" textLength="38.99" lengthAdjust="spacing" xml:space="preserve">www</text>
<rect x="550.50" y="1017.30" width="2.4" height="25.1" fill="#0dbc79"/>
<text x="571.20" y="1036.90" font-size="21.67" fill="#cccccc" stroke="#cccccc" stroke-width="0.45" font-family="Liberation Mono" textLength="64.99" lengthAdjust="spacing" xml:space="preserve">GET /</text>
<text x="649.20" y="1036.90" font-size="21.67" fill="#0dbc79" stroke="#0dbc79" stroke-width="0.45" font-family="Liberation Mono" textLength="38.99" lengthAdjust="spacing" xml:space="preserve">200</text>
<text x="701.20" y="1036.90" font-size="21.67" fill="#cccccc" stroke="#cccccc" stroke-width="0.45" font-family="Liberation Mono" textLength="194.99" lengthAdjust="spacing" xml:space="preserve">31.696 ms - 211</text>
<text x="428.20" y="1067.90" font-size="21.67" fill="#0dbc79" stroke="#0dbc79" stroke-width="0.45" font-family="Liberation Mono" textLength="12.99" lengthAdjust="spacing" xml:space="preserve">0</text>
<rect x="446.50" y="1048.30" width="2.4" height="25.1" fill="#0dbc79"/>
<text x="454.20" y="1067.90" font-size="21.67" fill="#0dbc79" stroke="#0dbc79" stroke-width="0.45" font-family="Liberation Mono" textLength="38.99" lengthAdjust="spacing" xml:space="preserve">www</text>
<rect x="550.50" y="1048.30" width="2.4" height="25.1" fill="#0dbc79"/>
<text x="571.20" y="1067.90" font-size="21.67" fill="#cccccc" stroke="#cccccc" stroke-width="0.45" font-family="Liberation Mono" textLength="337.99" lengthAdjust="spacing" xml:space="preserve">GET /stylesheets/style.css</text>
<text x="922.20" y="1067.90" font-size="21.67" fill="#0dbc79" stroke="#0dbc79" stroke-width="0.45" font-family="Liberation Mono" textLength="38.99" lengthAdjust="spacing" xml:space="preserve">200</text>
<text x="974.20" y="1067.90" font-size="21.67" fill="#cccccc" stroke="#cccccc" stroke-width="0.45" font-family="Liberation Mono" textLength="181.99" lengthAdjust="spacing" xml:space="preserve">8.762 ms - 111</text>
<rect x="429.20" y="1079.00" width="11.00" height="29.00" fill="none" stroke="#cccccc" stroke-width="2"/>
<path d="M22.9 1128.2 L29.9 1134.9 L22.9 1141.8" stroke="#ffffff" stroke-width="2.0" fill="none" stroke-linejoin="round" stroke-linejoin="miter"/>
<path d="M37.9 1121.8 L31 1128.4 L37.9 1135.2" stroke="#ffffff" stroke-width="2.0" fill="none" stroke-linejoin="round" stroke-linejoin="miter"/>
<text transform="translate(48.85,1140.80) scale(0.9451,1)" font-size="21.00" fill="#ffffff" stroke="#ffffff" stroke-width="0.3" font-family="Liberation Sans" >SSH: 10.34.1.240</text>
<circle cx="249.8" cy="1132.2" r="9.8" fill="none" stroke="#ffffff" stroke-width="2"/>
<line x1="245.40" y1="1127.80" x2="254.20" y2="1136.60" stroke="#ffffff" stroke-width="2" stroke-linecap="butt" />
<line x1="254.20" y1="1127.80" x2="245.40" y2="1136.60" stroke="#ffffff" stroke-width="2" stroke-linecap="butt" />
<text transform="translate(269.50,1140.80) scale(0.9273,1)" font-size="21.00" fill="#ffffff" stroke="#ffffff" stroke-width="0.3" font-family="Liberation Sans" >0</text>
<path d="M298.7 1122.6 L309 1141.4 H288.4 Z" stroke="#ffffff" stroke-width="2" fill="none" stroke-linejoin="round" />
<line x1="298.70" y1="1129.00" x2="298.70" y2="1135.50" stroke="#ffffff" stroke-width="2" stroke-linecap="butt" />
<circle cx="298.7" cy="1138" r="1.2" fill="#ffffff"/>
<text transform="translate(318.00,1140.80) scale(1.0000,1)" font-size="21.00" fill="#ffffff" stroke="#ffffff" stroke-width="0.3" font-family="Liberation Sans" >0</text>
<path d="M366 1123 Q361.5 1128 366 1133.5 M376.8 1123 Q381.3 1128 376.8 1133.5 M369.3 1125.6 Q367.2 1128.2 369.3 1131 M373.5 1125.6 Q375.6 1128.2 373.5 1131 M371.4 1130 L366 1142 M371.4 1130 L376.8 1142 M367.5 1138.5 H375.3" stroke="#ffffff" stroke-width="1.8" fill="none" stroke-linejoin="round" />
<circle cx="371.4" cy="1128.3" r="1.8" fill="#ffffff"/>
<text transform="translate(389.90,1140.80) scale(0.8818,1)" font-size="21.00" fill="#ffffff" stroke="#ffffff" stroke-width="0.3" font-family="Liberation Sans" >0</text>
<text transform="translate(1638.81,1141.00) scale(0.9866,1)" font-size="21.00" fill="#ffffff" stroke="#ffffff" stroke-width="0.3" font-family="Liberation Sans" >Ln 7, Col 19</text>
<text transform="translate(1779.05,1141.00) scale(0.9457,1)" font-size="21.00" fill="#ffffff" stroke="#ffffff" stroke-width="0.3" font-family="Liberation Sans" >Spaces: 2</text>
<text transform="translate(1895.93,1141.00) scale(0.9741,1)" font-size="21.00" fill="#ffffff" stroke="#ffffff" stroke-width="0.3" font-family="Liberation Sans" >UTF-8</text>
<text transform="translate(1982.13,1141.00) scale(0.8696,1)" font-size="21.00" fill="#ffffff" stroke="#ffffff" stroke-width="0.3" font-family="Liberation Sans" >LF</text>
<text transform="translate(2031.50,1141.00) scale(0.9673,1)" font-size="21.00" fill="#ffffff" stroke="#ffffff" stroke-width="0.3" font-family="Liberation Sans" >JavaScript</text>
<circle cx="2163.9" cy="1131.4" r="4.4" fill="none" stroke="#ffffff" stroke-width="1.8"/>
<path d="M2157 1143.6 A7.1 7.1 0 0 1 2171.2 1143.6" stroke="#ffffff" stroke-width="1.8" fill="none" stroke-linejoin="round" />
<path d="M2162.8 1125.5 V1122.1 H2178 V1132.4 H2174.2 L2171.6 1135.4 V1132.8" stroke="#ffffff" stroke-width="1.8" fill="none" stroke-linejoin="round" />
<path d="M2213 1139.6 H2229.4 L2228 1136 V1129.6 A6.9 6.9 0 0 0 2214.2 1129.6 V1136 Z" stroke="#ffffff" stroke-width="1.8" fill="none" stroke-linejoin="round" />
<path d="M2218.6 1140.4 A2.6 2.6 0 0 0 2223.6 1140.4" stroke="#ffffff" stroke-width="1.8" fill="none" stroke-linejoin="round" />
</svg></div></body></html>
